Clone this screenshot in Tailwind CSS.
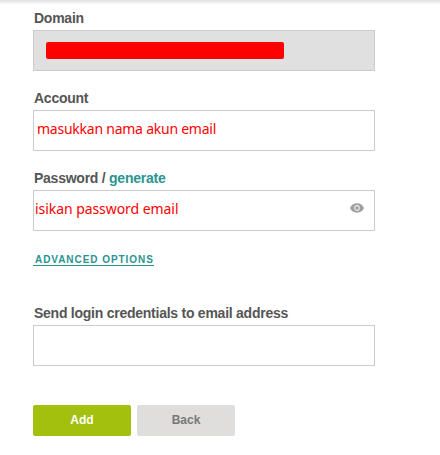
<!DOCTYPE html>
<html lang="en">
  <head>
    <meta charset="UTF-8" />
    <meta name="viewport" content="width=device-width, initial-scale=1.0" />
    <script src="https://cdn.jsdelivr.net/npm/@tailwindcss/browser@4"></script>
    <title>Add email account</title>
  </head>
  <body class="bg-white font-['Liberation_Sans',Arial,sans-serif] text-sm leading-5 text-[#555]">
    <!-- shadow of the page header -->
    <div class="h-1 bg-linear-to-b from-[#e0e0e0] to-[#fafafa]"></div>

    <form class="ml-[33px] mt-1 w-[342px]">
      <div>
        <label class="block pl-px font-bold tracking-[-0.25px]">Domain</label>
        <div class="mt-0.5 flex h-[41px] items-center border border-[#ccc] bg-[#e0e0e0] pl-3">
          <span class="h-[17px] w-[238px] rounded-xs bg-[#f00]"></span>
        </div>
      </div>

      <div class="mt-[17px]">
        <label for="account" class="block pl-px font-bold tracking-[-0.25px]">Account</label>
        <input
          type="text"
          id="account"
          value="masukkan nama akun email"
          class="mt-0.5 block h-[41px] w-full border border-[#ccc] pb-1 pl-[3px] font-['Noto_Sans',sans-serif] text-[14px] tracking-[-0.24px] text-[#f00] outline-none"
        />
      </div>

      <div class="mt-[17px]">
        <label for="password" class="block pl-px font-bold tracking-[-0.25px]"
          >Password / <a href="#" class="text-[#2a9490]">generate</a></label
        >
        <div class="mt-0.5 flex h-[41px] items-center border border-[#ccc] pr-[10px]">
          <input
            type="text"
            id="password"
            value="isikan password email"
            class="h-full min-w-0 flex-1 pb-1 pl-px font-['Noto_Sans',sans-serif] text-[14px] tracking-[-0.06px] text-[#f00] outline-none"
          />
          <svg class="mt-[-6px] h-[10px] w-[14px]" viewBox="0 0 14 10">
            <path d="M7 .3C3.800.3 1.200 2.100 0 5c1.200 2.900 3.800 4.700 7 4.700s5.800-1.800 7-4.700C12.800 2.100 10.200.3 7 .3z" fill="#a0a0a0" />
            <circle cx="7" cy="5" r="2.300" fill="#a0a0a0" stroke="#e8e8e8" stroke-width="1.200" />
          </svg>
        </div>
      </div>

      <div class="mt-[22px] flex">
        <a href="#" class="h-[13px] border-b border-[#2a9490] pl-0.5 text-[10px] font-bold leading-[13px] tracking-[0.94px] text-[#2a9490]"
          >ADVANCED OPTIONS</a
        >
      </div>

      <div class="mt-[37px]">
        <label for="send" class="block pl-px font-bold tracking-[-0.25px]">Send login credentials to email address</label>
        <input type="text" id="send" class="mt-0.5 block h-[41px] w-full border border-[#ccc] outline-none" />
      </div>

      <div class="mt-[39px] flex gap-1.5 text-xs font-bold">
        <button type="button" class="h-[31px] w-[98px] rounded-xs bg-[#a2c00d] pb-0.5 text-white">Add</button>
        <button type="button" class="h-[31px] w-[98px] rounded-xs bg-[#dfdedc] pb-0.5 text-[#777]">Back</button>
      </div>
    </form>
  </body>
</html>
